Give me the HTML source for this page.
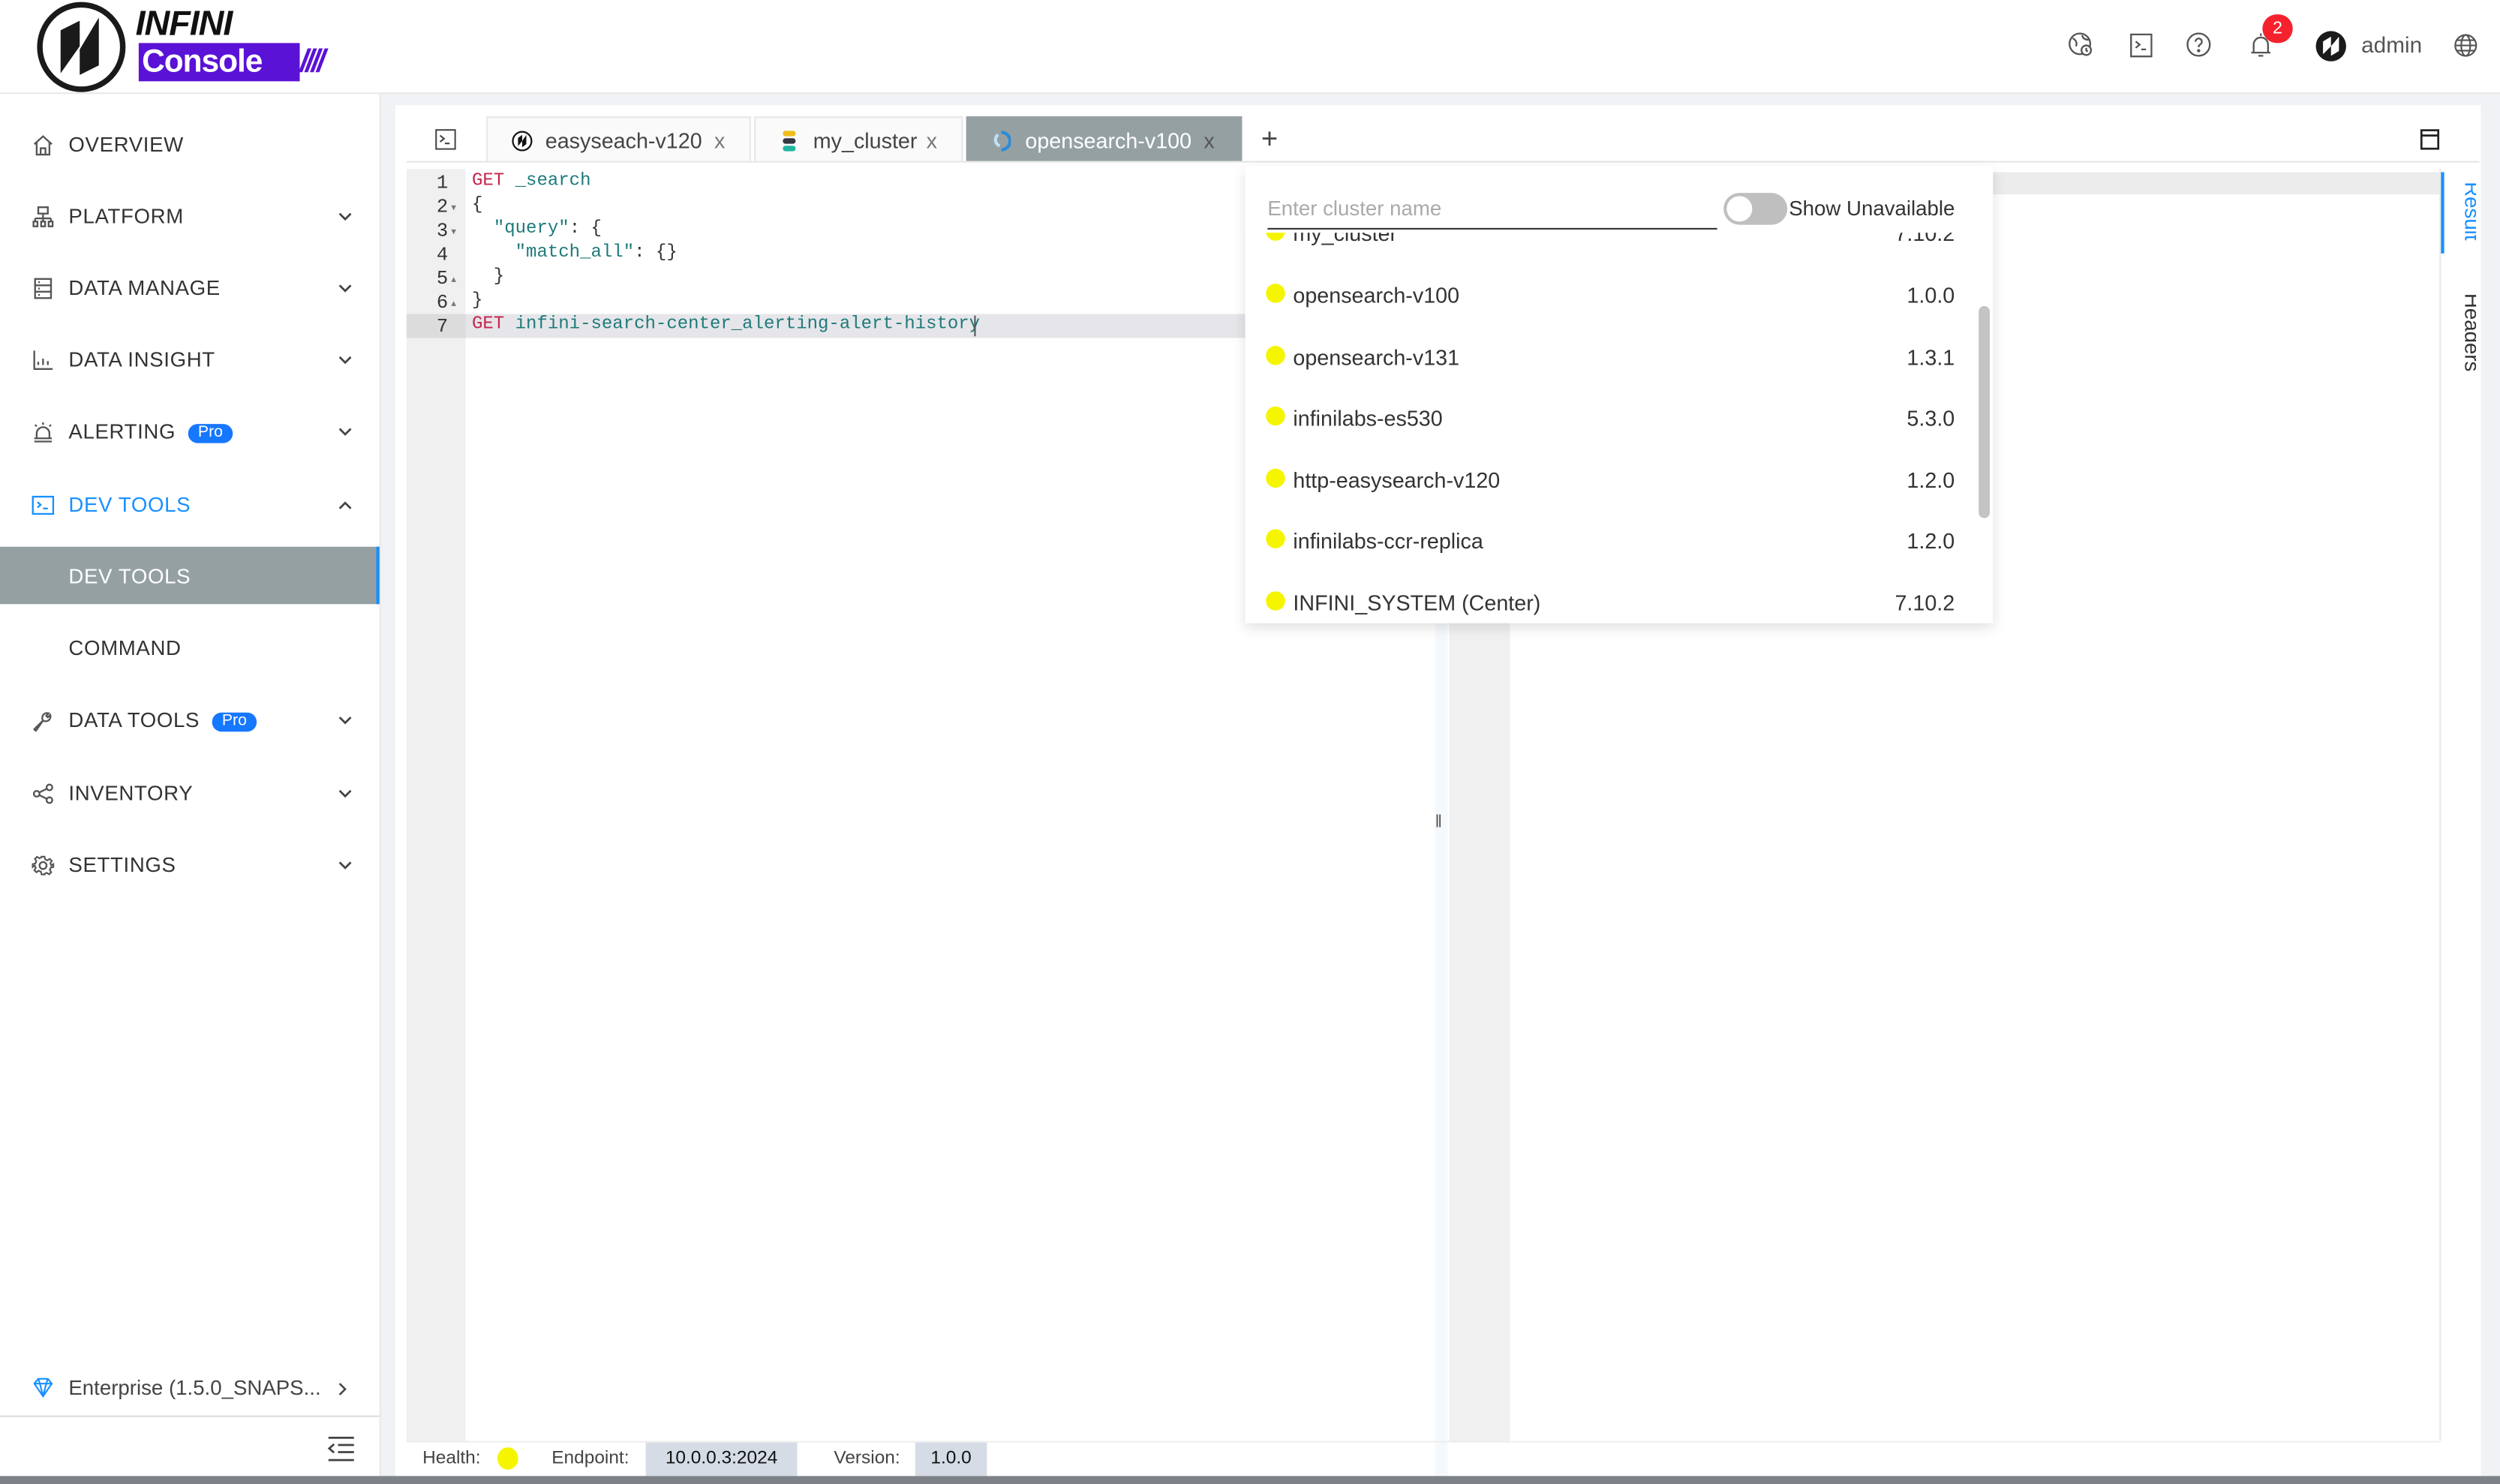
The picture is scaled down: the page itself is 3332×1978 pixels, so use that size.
<!DOCTYPE html>
<html><head><meta charset="utf-8"><style>
html,body{margin:0;padding:0;width:3332px;height:1978px;overflow:hidden;background:#fff}
#r{position:absolute;left:0;top:0;width:1568px;height:931px;transform:scale(2.125,2.1246);transform-origin:0 0;font-family:"Liberation Sans",sans-serif;color:#333;overflow:hidden;background:#f0f2f5}
.a{position:absolute}
.nav{position:absolute;left:0;width:238px;height:36px;font-size:13px;letter-spacing:.3px;color:#333;line-height:38px}
.nav .t{position:absolute;left:43px}
.nav svg.i{position:absolute;left:20px;top:12px}
.nav .ch{position:absolute;left:212px;top:16px}
.pro{display:inline-block;background:#1677ff;color:#fff;font-size:10px;line-height:12px;border-radius:6px;padding:0 6px;margin-left:8px;vertical-align:1px;letter-spacing:0}
.tab{position:absolute;top:73px;height:28px;background:#fafafa;border:1px solid #e8e8e8;border-bottom:none;box-sizing:border-box;font-size:13.5px;line-height:30px;color:#444}
.ln{position:absolute;left:255px;width:26px;text-align:right;font-family:"Liberation Mono",monospace;font-size:12px;color:#333}
.cd{position:absolute;left:296px;font-family:"Liberation Mono",monospace;font-size:11.3px;white-space:pre;color:#333}
.k{color:#c7254e}.s{color:#1e7a7a}
.it{position:absolute;left:781px;width:452px;height:38px;font-size:13.5px;color:#333}
.it .d{position:absolute;left:13px;top:12px;width:12px;height:12px;border-radius:50%;background:#f5f500}
.it .n{position:absolute;left:30px;top:12px}
.it .v{position:absolute;right:7px;top:12px}
</style></head><body><div id="r">
<!-- header -->
<div class="a" style="left:0;top:0;width:1568px;height:58px;background:#fff;border-bottom:1px solid #e8e8e8"></div>
<svg class="a" style="left:22px;top:1px" width="60" height="57" viewBox="0 0 60 57"><ellipse cx="29" cy="28.5" rx="26" ry="26.5" fill="none" stroke="#1a1a1a" stroke-width="3.5"/><path d="M16 45 V18 L28 12 V30 L40 10 V40 L28 46 V28 Z" fill="#1a1a1a"/></svg>
<div class="a" style="left:85px;top:2px;font-size:22px;font-weight:bold;font-style:italic;color:#111;letter-spacing:-.5px">INFINI</div>
<div class="a" style="left:87px;top:27px;width:101px;height:24px;background:#5a12d6"></div>
<div class="a" style="left:89px;top:27px;font-size:20px;font-weight:bold;color:#fff;line-height:24px;letter-spacing:-.5px">Console</div>
<div class="a" style="left:188px;top:27px;font-size:20px;font-weight:bold;font-style:italic;color:#5a12d6;line-height:24px;letter-spacing:-2px">////</div>
<!-- header right icons -->
<svg class="a" style="left:1297px;top:20px" width="16" height="16" viewBox="0 0 16 16" fill="none" stroke="#555" stroke-width="1.1"><circle cx="7.5" cy="7.5" r="6.5"/><path d="M3 4c2 1 3 3 2 5M9 2c0 2 2 3 4 3"/><circle cx="11.5" cy="11.5" r="3" fill="#fff"/><path d="M11.5 10v1.7l1 .6"/></svg>
<svg class="a" style="left:1336px;top:21px" width="14" height="15" viewBox="0 0 14 15" fill="none" stroke="#555" stroke-width="1.1"><rect x=".6" y=".6" width="12.8" height="13.8"/><path d="M3.5 5l2.5 2-2.5 2M7 10h3"/></svg>
<svg class="a" style="left:1371px;top:20px" width="16" height="16" viewBox="0 0 16 16" fill="none" stroke="#555" stroke-width="1.1"><circle cx="8" cy="8" r="7"/><path d="M6 6.2a2 2 0 1 1 2.8 1.8C8.2 8.4 8 8.8 8 9.6"/><circle cx="8" cy="11.8" r=".5" fill="#555"/></svg>
<svg class="a" style="left:1411px;top:20px" width="14" height="17" viewBox="0 0 14 17" fill="none" stroke="#555" stroke-width="1.1"><path d="M7 1v1.5M2.5 13V8a4.5 4.5 0 0 1 9 0v5M1 13h12M5.5 15h3"/></svg>
<div class="a" style="left:1419px;top:9px;width:19px;height:18px;border-radius:9px;background:#f5222d;color:#fff;font-size:11px;text-align:center;line-height:18px">2</div>
<svg class="a" style="left:1452px;top:19px" width="20" height="20" viewBox="0 0 20 20"><circle cx="10" cy="10" r="9.5" fill="#1a1a1a"/><path d="M5 15V7l5-3v6l5-6v9l-5 3v-6z" fill="#fff"/></svg>
<div class="a" style="left:1481px;top:20px;font-size:14px;color:#555">admin</div>
<svg class="a" style="left:1539px;top:21px" width="15" height="15" viewBox="0 0 16 16" fill="none" stroke="#555" stroke-width="1.1"><circle cx="8" cy="8" r="7"/><ellipse cx="8" cy="8" rx="3" ry="7"/><path d="M1 8h14M2 4.5h12M2 11.5h12"/></svg>

<!-- sidebar -->
<div class="a" style="left:0;top:59px;width:238px;height:868px;background:#fff;border-right:1px solid #e8e8e8"></div>
<div class="nav" style="top:72px"><svg class="i" width="14" height="14" viewBox="0 0 14 14" fill="none" stroke="#555" stroke-width="1.1"><path d="M1.5 6.5L7 1.5l5.5 5M3 5.5V13h8V5.5M5.5 13V9h3v4"/></svg><span class="t">OVERVIEW</span></div>
<div class="nav" style="top:117px"><svg class="i" width="14" height="14" viewBox="0 0 14 14" fill="none" stroke="#555" stroke-width="1.1"><rect x="4" y="1" width="6" height="4"/><path d="M7 5v3M2 8h10M2 8v2M7 8v2M12 8v2"/><rect x="1" y="10" width="2.5" height="3"/><rect x="5.8" y="10" width="2.5" height="3"/><rect x="10.5" y="10" width="2.5" height="3"/></svg><span class="t">PLATFORM</span><svg class="ch" width="9" height="6" viewBox="0 0 9 6" fill="none" stroke="#444" stroke-width="1.3"><path d="M1 1l3.5 3.5L8 1"/></svg></div>
<div class="nav" style="top:162px"><svg class="i" width="14" height="14" viewBox="0 0 14 14" fill="none" stroke="#555" stroke-width="1.1"><rect x="2" y="1" width="10" height="12"/><path d="M2 5h10M2 9h10M4 3h1M4 7h1M4 11h1"/></svg><span class="t">DATA MANAGE</span><svg class="ch" width="9" height="6" viewBox="0 0 9 6" fill="none" stroke="#444" stroke-width="1.3"><path d="M1 1l3.5 3.5L8 1"/></svg></div>
<div class="nav" style="top:207px"><svg class="i" width="14" height="14" viewBox="0 0 14 14" fill="none" stroke="#555" stroke-width="1.1"><path d="M1.5 1v11.5H13M4 10V8M7 10V6M10 10V7.5"/></svg><span class="t">DATA INSIGHT</span><svg class="ch" width="9" height="6" viewBox="0 0 9 6" fill="none" stroke="#444" stroke-width="1.3"><path d="M1 1l3.5 3.5L8 1"/></svg></div>
<div class="nav" style="top:252px"><svg class="i" width="14" height="14" viewBox="0 0 14 14" fill="none" stroke="#555" stroke-width="1.1"><path d="M3 11V8a4 4 0 0 1 8 0v3M1.5 11h11M1.5 13h11M7 1v1.5M2 2.5l1 1M12 2.5l-1 1"/></svg><span class="t">ALERTING<span class="pro">Pro</span></span><svg class="ch" width="9" height="6" viewBox="0 0 9 6" fill="none" stroke="#444" stroke-width="1.3"><path d="M1 1l3.5 3.5L8 1"/></svg></div>
<div class="nav" style="top:298px;color:#1890ff"><svg class="i" width="14" height="14" viewBox="0 0 14 14" fill="none" stroke="#1890ff" stroke-width="1.1"><rect x=".6" y="1.6" width="12.8" height="10.8"/><path d="M3.5 5l2 1.7-2 1.7M7 9h3"/></svg><span class="t">DEV TOOLS</span><svg class="ch" width="9" height="6" viewBox="0 0 9 6" fill="none" stroke="#444" stroke-width="1.3"><path d="M1 5l3.5-3.5L8 5"/></svg></div>
<div class="a" style="left:0;top:343px;width:236px;height:36px;background:#95a0a3;border-right:2px solid #1890ff"></div>
<div class="nav" style="top:343px;color:#fff"><span class="t">DEV TOOLS</span></div>
<div class="nav" style="top:388px"><span class="t">COMMAND</span></div>
<div class="nav" style="top:433px"><svg class="i" width="14" height="14" viewBox="0 0 14 14" fill="none" stroke="#555" stroke-width="1.1"><path d="M1.5 12.5l5.5-5.5a3 3 0 0 1 3.5-4.5L9 4l1 1 1.5-1.5a3 3 0 0 1-4.5 3.5L2.5 13.5z"/></svg><span class="t">DATA TOOLS<span class="pro">Pro</span></span><svg class="ch" width="9" height="6" viewBox="0 0 9 6" fill="none" stroke="#444" stroke-width="1.3"><path d="M1 1l3.5 3.5L8 1"/></svg></div>
<div class="nav" style="top:479px"><svg class="i" width="14" height="14" viewBox="0 0 14 14" fill="none" stroke="#555" stroke-width="1.1"><circle cx="3" cy="7" r="1.8"/><circle cx="11" cy="3" r="1.8"/><circle cx="11" cy="11" r="1.8"/><path d="M4.6 6.2l4.8-2.4M4.6 7.8l4.8 2.4"/></svg><span class="t">INVENTORY</span><svg class="ch" width="9" height="6" viewBox="0 0 9 6" fill="none" stroke="#444" stroke-width="1.3"><path d="M1 1l3.5 3.5L8 1"/></svg></div>
<div class="nav" style="top:524px"><svg class="i" width="14" height="14" viewBox="0 0 14 14" fill="none" stroke="#555" stroke-width="1.1"><circle cx="7" cy="7" r="2.2"/><path d="M6 1h2l.4 1.8 1.5.7 1.6-1 1.4 1.4-1 1.6.7 1.5L14 6v2l-1.8.4-.7 1.5 1 1.6-1.4 1.4-1.6-1-1.5.7L8 13H6l-.4-1.8-1.5-.7-1.6 1-1.4-1.4 1-1.6-.7-1.5L0 8V6l1.8-.4.7-1.5-1-1.6 1.4-1.4 1.6 1 1.5-.7z" transform="translate(.5 .5) scale(.93)"/></svg><span class="t">SETTINGS</span><svg class="ch" width="9" height="6" viewBox="0 0 9 6" fill="none" stroke="#444" stroke-width="1.3"><path d="M1 1l3.5 3.5L8 1"/></svg></div>
<svg class="a" style="left:21px;top:864px" width="12" height="13" viewBox="0 0 12 13" fill="none" stroke="#1890ff" stroke-width="1"><path d="M3 1h6l2.5 3L6 12 .5 4zM.5 4h11M4 4l2 8 2-8M3 1l1 3M9 1l-1 3"/></svg>
<div class="a" style="left:43px;top:863px;font-size:13px;color:#444">Enterprise (1.5.0_SNAPS...</div>
<svg class="a" style="left:212px;top:867px" width="6" height="9" viewBox="0 0 6 9" fill="none" stroke="#444" stroke-width="1.2"><path d="M1 1l3.5 3.5L1 8"/></svg>
<div class="a" style="left:0;top:888px;width:238px;height:1px;background:#ddd"></div>
<svg class="a" style="left:205px;top:901px" width="18" height="16" viewBox="0 0 18 16" fill="none" stroke="#444" stroke-width="1.3"><path d="M1 1h16M7 5.5h10M7 10h10M1 15h16M4.5 5L1.5 7.7l3 2.6"/></svg>

<!-- card -->
<div class="a" style="left:248px;top:66px;width:1308px;height:860px;background:#fff"></div>
<svg class="a" style="left:273px;top:81px" width="13" height="13" viewBox="0 0 13 13" fill="none" stroke="#444" stroke-width="1"><rect x=".5" y=".5" width="12" height="12"/><path d="M3 4l2.5 2L3 8M6 9h3"/></svg>
<div class="tab" style="left:305px;width:166px"><svg class="a" style="left:15px;top:8px" width="13" height="13" viewBox="0 0 20 20"><circle cx="10" cy="10" r="9" fill="#fff" stroke="#111" stroke-width="1.6"/><path d="M6 15V7l4-3v6l4-6v9l-4 3v-6z" fill="#111"/></svg><span class="a" style="left:36px">easyseach-v120</span><span class="a" style="left:142px;color:#777">x</span></div>
<div class="tab" style="left:473px;width:131px"><svg class="a" style="left:16px;top:8px" width="10" height="13" viewBox="0 0 10 13"><rect x="1" y="0" width="8" height="3.5" rx="1.7" fill="#f0bd1a"/><rect x="1" y="4.7" width="8" height="3.5" rx="1.7" fill="#343741"/><rect x="1" y="9.4" width="8" height="3.5" rx="1.7" fill="#20b5a3"/></svg><span class="a" style="left:36px">my_cluster</span><span class="a" style="left:107px;color:#777">x</span></div>
<div class="tab" style="left:606px;width:173px;background:#95a0a3;border-color:#95a0a3;color:#fff"><svg class="a" style="left:15px;top:8px" width="12" height="13" viewBox="0 0 12 13" fill="none"><path d="M6 1a5.5 5.5 0 0 1 0 11" stroke="#2a8bd8" stroke-width="2"/><path d="M4 2.5a4 4 0 0 0 1 7" stroke="#bfe0f5" stroke-width="2"/></svg><span class="a" style="left:36px">opensearch-v100</span><span class="a" style="left:148px;color:#555">x</span></div>
<div class="a" style="left:791px;top:77px;font-size:18px;color:#444;font-weight:300">+</div>
<svg class="a" style="left:1518px;top:81px" width="12" height="13" viewBox="0 0 12 13" fill="none" stroke="#222" stroke-width="1.3"><rect x=".7" y=".7" width="10.6" height="11.6"/><path d="M.7 4h10.6"/></svg>
<div class="a" style="left:255px;top:101px;width:1300px;height:1px;background:#e6e6e6"></div>

<!-- editor -->
<div class="a" style="left:255px;top:106px;width:37px;height:798px;background:#f0f0f0"></div>
<div class="a" style="left:255px;top:197px;width:526px;height:15px;background:#e6e6ea"></div>
<div class="a" style="left:255px;top:197px;width:37px;height:15px;background:#dcdcdc"></div>
<div class="ln" style="top:108px">1</div>
<div class="ln" style="top:123px">2</div>
<div class="ln" style="top:138px">3</div>
<div class="ln" style="top:153px">4</div>
<div class="ln" style="top:168px">5</div>
<div class="ln" style="top:183px">6</div>
<div class="ln" style="top:198px">7</div>
<div class="a" style="left:283px;top:127px;font-size:6px;color:#777">▾</div>
<div class="a" style="left:283px;top:142px;font-size:6px;color:#777">▾</div>
<div class="a" style="left:283px;top:172px;font-size:6px;color:#777">▴</div>
<div class="a" style="left:283px;top:187px;font-size:6px;color:#777">▴</div>
<div class="cd" style="top:108px"><span class="k">GET</span> <span class="s">_search</span></div>
<div class="cd" style="top:123px">{</div>
<div class="cd" style="top:138px">  <span class="s">"query"</span>: {</div>
<div class="cd" style="top:153px">    <span class="s">"match_all"</span>: {}</div>
<div class="cd" style="top:168px">  }</div>
<div class="cd" style="top:183px">}</div>
<div class="cd" style="top:198px"><span class="k">GET</span> <span class="s">infini-search-center_alerting-alert-history</span></div>
<div class="a" style="left:611px;top:198px;width:1px;height:13px;background:#555"></div>

<!-- splitter and right pane -->
<div class="a" style="left:900px;top:104px;width:8px;height:822px;background:#f6f9fc"></div>
<div class="a" style="left:900px;top:510px;font-size:11px;color:#555">‖</div>
<div class="a" style="left:909px;top:106px;width:38px;height:798px;background:#f0f0f0"></div>
<div class="a" style="left:947px;top:108px;width:583px;height:14px;background:#ececec"></div>
<div class="a" style="left:1530px;top:106px;width:1px;height:798px;background:#e8e8e8"></div>
<div class="a" style="left:1531px;top:108px;width:2px;height:51px;background:#1890ff"></div>
<div class="a" style="left:1533px;top:106px;width:20px;height:200px;overflow:hidden">
<div class="a" style="left:10px;top:8px;writing-mode:vertical-rl;font-size:13px;color:#1890ff">Result</div>
<div class="a" style="left:10px;top:78px;writing-mode:vertical-rl;font-size:13px;color:#333">Headers</div>
</div>
<div class="a" style="left:255px;top:904px;width:1275px;height:1px;background:#eee"></div>

<!-- status bar -->
<div class="a" style="left:265px;top:909px;font-size:11.5px;color:#444">Health:</div>
<div class="a" style="left:312px;top:908px;width:13px;height:14px;border-radius:50%;background:#f5f500"></div>
<div class="a" style="left:346px;top:909px;font-size:11.5px;color:#444">Endpoint:</div>
<div class="a" style="left:405px;top:905px;width:95px;height:21px;background:#d5dce6;font-size:11.5px;color:#111;text-align:center;line-height:21px">10.0.0.3:2024</div>
<div class="a" style="left:523px;top:909px;font-size:11.5px;color:#444">Version:</div>
<div class="a" style="left:574px;top:905px;width:45px;height:21px;background:#d5dce6;font-size:11.5px;color:#111;text-align:center;line-height:21px">1.0.0</div>
<div class="a" style="left:0;top:926px;width:1568px;height:5px;background:#7d8288"></div>

<!-- dropdown -->
<div class="a" style="left:781px;top:104px;width:469px;height:287px;background:#fff;box-shadow:0 3px 8px rgba(0,0,0,.12)"></div>
<div class="a" style="left:781px;top:104px;width:469px;height:287px;overflow:hidden">
 <div class="it" style="left:0;top:23px"><div class="d"></div><div class="n">my_cluster</div><div class="v">7.10.2</div></div>
 <div class="a" style="left:0;top:0;width:460px;height:42px;background:#fff"></div>
 <div class="a" style="left:14px;top:19px;font-size:13px;color:#aaa">Enter cluster name</div>
 <div class="a" style="left:14px;top:39px;width:282px;height:1px;background:#333"></div>
 <div class="a" style="left:300px;top:17px;width:40px;height:20px;border-radius:10px;background:#bfbfbf"></div>
 <div class="a" style="left:302px;top:19px;width:16px;height:16px;border-radius:50%;background:#fff"></div>
 <div class="a" style="left:341px;top:19px;font-size:13px;color:#333">Show Unavailable</div>
 <div class="it" style="left:0;top:62px"><div class="d"></div><div class="n">opensearch-v100</div><div class="v">1.0.0</div></div>
 <div class="it" style="left:0;top:101px"><div class="d"></div><div class="n">opensearch-v131</div><div class="v">1.3.1</div></div>
 <div class="it" style="left:0;top:139px"><div class="d"></div><div class="n">infinilabs-es530</div><div class="v">5.3.0</div></div>
 <div class="it" style="left:0;top:178px"><div class="d"></div><div class="n">http-easysearch-v120</div><div class="v">1.2.0</div></div>
 <div class="it" style="left:0;top:216px"><div class="d"></div><div class="n">infinilabs-ccr-replica</div><div class="v">1.2.0</div></div>
 <div class="it" style="left:0;top:255px"><div class="d"></div><div class="n">INFINI_SYSTEM (Center)</div><div class="v">7.10.2</div></div>
 <div class="a" style="left:460px;top:88px;width:7px;height:133px;border-radius:4px;background:#c4c4c4"></div>
</div>
</div></body></html>
